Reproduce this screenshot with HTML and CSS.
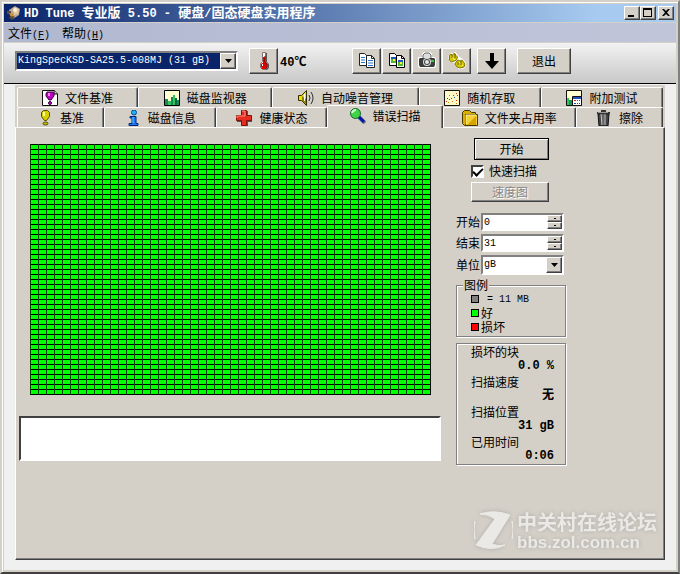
FILE: index.html
```html
<!DOCTYPE html>
<html lang="zh-CN">
<head>
<meta charset="utf-8">
<meta name="viewport" content="width=device-width, initial-scale=1">
<title>HD Tune 专业版 5.50</title>
<link rel="stylesheet" href="styles.css">
</head>
<body>
<div class="window">
  <header class="titlebar">
    <svg class="app-icon" width="16" height="16" viewBox="0 0 16 16"><path d="M3 5 9 1l5 3-1 6-6 4-3-3z" fill="#b9aa96"/><path d="M8 2l5 2-1 5-4 1z" fill="#e8c8a0"/><circle cx="9" cy="5" r="2" fill="#fff0d8"/><path d="M1 6h4v3H1zM5 10l4 2-3 3-3-2z" fill="#5a4a40"/><path d="M3 8l5 1-2 3z" fill="#d79030"/></svg>
    <h1><span class="latin">HD Tune </span>专业版<span class="latin"> 5.50 - </span>硬盘<span class="latin">/</span>固态硬盘实用程序</h1>
    <div class="window-buttons">
      <button class="raised" aria-label="最小化"><svg width="10" height="10" viewBox="0 0 10 10"><path d="M1 7h6v2H1z"/></svg></button>
      <button class="raised" aria-label="最大化"><svg width="10" height="10" viewBox="0 0 10 10"><path fill-rule="evenodd" d="M0 0h9v9H0zM1 2v6h7V2z"/></svg></button>
      <button class="raised close" aria-label="关闭"><svg width="10" height="10" viewBox="0 0 10 10"><path d="M1 1h2l2 2 2-2h2L6 4.500 9 8H7L5 6 3 8H1l3-3.500z"/></svg></button>
    </div>
  </header>
  <nav class="menubar">
    <a href="#file">文件<span class="key">(<u>F</u>)</span></a>
    <a href="#help">帮助<span class="key">(<u>H</u>)</span></a>
  </nav>
  <div class="toolbar">
    <div class="combo drive">
      <select aria-label="硬盘"><option>KingSpecKSD-SA25.5-008MJ (31 gB)</option></select>
      <span class="arrow raised"><svg width="7" height="4" viewBox="0 0 7 4"><path d="M0 0h7L3.500 4z"/></svg></span>
    </div>
    <button class="raised tool" aria-label="温度"><svg width="14" height="20" viewBox="0 0 14 20"><path d="M7 2h3v9l2 2v4l-2 2H6z" fill="#555"/><path d="M5.500 1.500h3v9l2 2v4l-2 2h-3l-2-2v-4l2-2z" fill="#fff" stroke="#8a7070"/><path d="M6 6h2v6H6z" fill="#e00000"/><path d="M5 12h4l1 1v3l-1 2H5l-1-2v-3z" fill="#e00000"/><path d="M5 13h1v2H5z" fill="#fff"/><path d="M8 5v6l2 2v3l-2 2" fill="none" stroke="#800000"/></svg></button>
    <output class="temperature">40℃</output>
    <div class="tool-group">
      <button class="raised tool" aria-label="复制文本"><svg width="18" height="18" viewBox="0 0 18 18"><path d="M1.500 1.500h5l2 2v10h-7zM8.500 3.500h5l3 3v9h-8z" fill="#fff" stroke="#222"/><path d="M13.500 3.500v3h3" fill="none" stroke="#222"/><path d="M3 5.500h4M3 8h4M3 10.500h4M10 8.500h5M10 11h5M10 13.500h5" stroke="#2874cc"/></svg></button>
      <button class="raised tool" aria-label="复制图像"><svg width="18" height="18" viewBox="0 0 18 18"><path d="M1.500 1.500h5l2 2v10h-7zM8.500 3.500h5l3 3v9h-8z" fill="#fff" stroke="#000"/><path d="M13.500 3.500v3h3" fill="none" stroke="#000"/><path d="M3 5h5v6H3zM10 8h5v6h-5z" fill="#52b929"/><path d="M3 5h5v2H3zM10 8h5v2h-5z" fill="#1759bc"/><path d="M5 7h2v2H5zM12 10h2v2h-2z" fill="#ffed50"/></svg></button>
      <button class="raised tool" aria-label="屏幕截图"><svg width="18" height="18" viewBox="0 0 18 18"><path d="M0 5h4V2l2-2h6l2 2v3h3l1 2v7l-1 2H1l-1-2z" fill="#fff"/><path d="M5 6V3l2-2h4l2 2v3" fill="#ddd" stroke="#666"/><path d="M2 6h14l1 1v6l-1 2H2l-1-2V7z" fill="#3a3d3d"/><circle cx="9" cy="10" r="4" fill="#ddd"/><circle cx="9" cy="10" r="3" fill="#454545"/><circle cx="9" cy="10" r="2" fill="#e8e8e8"/><path d="M13 8h3v2h-3z" fill="#31d03b"/></svg></button>
      <button class="raised tool" aria-label="选项"><svg width="18" height="18" viewBox="0 0 18 18"><path d="M1 4l2-3 2 1 2-2 3 4 1 2 2 0 3 3 2 3-2 4-5 1-3-3v-3l-4-1-3-3z" fill="#fff" stroke="#fff"/><path d="M1.500 4l1-2 2 1 2-2 1 2 2 2-1 3-2 1-3 1-2-2zM8 10l2-2 2 1 2-1 3 4-1 3-4 1-3-1-2-3z" fill="#d8ca00" stroke="#807600"/><path d="M3 4l4 4m4 2 4 4" stroke="#fff58a"/><path d="M4 3v3m3-4v4m3 4v3m3-4v4" stroke="#665f00"/></svg></button>
    </div>
    <button class="raised tool save" aria-label="保存"><svg width="16" height="18" viewBox="0 0 16 18"><path d="M6 1h4v8h5l-7 8-7-8h5z"/></svg></button>
    <button class="raised exit">退出</button>
  </div>
  <main class="client">
    <div class="tabs" role="tablist">
      <div class="tab-row back">
        <button role="tab"><svg class="icon" viewBox="0 0 16 16"><path d="M.5.5h12l3 3v12H.5z" fill="#fff" stroke="#111"/><path d="M12 0v4h4" fill="#bbb" stroke="#111"/><path d="M5 2h6l1 2v2l-3 4H7L4 6V4z" fill="#c000c0" stroke="#400040"/><path d="M6 3h2v3H6z" fill="#ff80ff"/><circle cx="8" cy="13" r="1.500" fill="#c000c0" stroke="#400040"/></svg>文件基准</button>
        <button role="tab"><svg class="icon" viewBox="0 0 16 16"><path d="M.5.5h15v15H.5z" fill="#ffffd0" stroke="#000"/><path d="M1 9h3v6H1zm6-2h2v8H7zm6 3h2v5h-2z" fill="#178b56"/><path d="M4 11h3v4H4zm5-6h2v10H9z" fill="#35c45b"/><path d="M11 8h2v7h-2z" fill="#087044"/></svg>磁盘监视器</button>
        <button role="tab"><svg class="icon" viewBox="0 0 16 16"><path d="M.5 5.500h3l5-5v15l-5-5h-3z" fill="#eee000" stroke="#332f00"/><path d="M4 6v5l4 3V9z" fill="#8a8000"/><path d="M6.500 4v7" stroke="#fff"/><path d="M11 5q2 3 0 6m2-9q4 6 0 12" fill="none" stroke="#333"/></svg>自动噪音管理</button>
        <button role="tab"><svg class="icon" viewBox="0 0 16 16"><path d="M.5.5h15v15H.5z" fill="#fff9c8" stroke="#111"/><path d="M2 11h1v1H2zm3-2h1v1H5zm4-4h1v1H9zm3-2h1v1h-1zm0 7h1v1h-1z" fill="#e02020"/><path d="M3 8h1v1H3zm4 0h1v1H7zm3-1h1v1h-1zm3-2h1v1h-1z" fill="#2050d0"/><path d="M4 12h1v1H4zm4-1h1v1H8zm4 2h1v1h-1zM5 5h1v1H5z" fill="#d08000"/></svg>随机存取</button>
        <button role="tab"><svg class="icon" viewBox="0 0 16 16"><path d="M.5.5h15v15H.5z" fill="#ffffd0" stroke="#111"/><path d="M1 8h2v7H1z" fill="#35c45b"/><path d="M3 10h3v5H3z" fill="#169451"/><path d="M6.500 6.500h9v9h-9z" fill="#fff" stroke="#111"/><path d="M7 7h8v2H7z" fill="#244ebd"/><path d="M8 10h2v1H8zm3 0h1v1h-1zm2 0h1v1h-1z" fill="#d22"/><path d="M8 13h2v1H8zm3 0h1v1h-1zm2 0h1v1h-1z" fill="#24b"/></svg>附加测试</button>
      </div>
      <div class="tab-row front">
        <button role="tab"><svg class="icon" viewBox="0 0 16 16"><path d="M6.500.5h4l2 2v4l-3 4h-2l-3-4v-4z" fill="#d8cf00" stroke="#514e00"/><path d="M6 2h2v4H6z" fill="#ffffa0"/><ellipse cx="8.500" cy="13.500" rx="2.500" ry="1.500" fill="#c5bb00" stroke="#514e00"/></svg>基准</button>
        <button role="tab"><svg class="icon" viewBox="0 0 16 16"><circle cx="9" cy="2.500" r="2.500" fill="#20b0ff" stroke="#004b8c"/><path d="M5 6.500h6v7h2v2H4v-2h3V8H5z" fill="#1878ff" stroke="#002871"/><path d="M8 7v6" stroke="#69c7ff"/></svg>磁盘信息</button>
        <button role="tab"><svg class="icon" viewBox="0 0 16 16"><path d="M6 1h6v5h4v6h-4v4H6v-4H1V6h5z" fill="#555"/><path d="M5.500.5h5v5h5v5h-5v5h-5v-5h-5v-5h5z" fill="#e52c20" stroke="#841008"/><path d="M6 1h3v5H1v2" fill="none" stroke="#ff9280"/></svg>健康状态</button>
        <button role="tab" aria-selected="true"><svg class="icon" viewBox="0 0 16 16"><path d="M9 9l6 6" stroke="#777" stroke-width="4"/><path d="M9 9l5 5" stroke="#0018b0" stroke-width="3"/><circle cx="5.500" cy="5.500" r="5" fill="#42d247" stroke="#16602d"/><path d="M2 5q1-3 4-3" fill="none" stroke="#d4ffd4" stroke-width="2"/></svg>错误扫描</button>
        <button role="tab"><svg class="icon" viewBox="0 0 16 16"><path d="M.5 2.500l2-2h5l2 2h4v13h-11l-2-2z" fill="#d7ad00" stroke="#493900"/><path d="M3.500 4.500h12v11h-12z" fill="#f4cf38" stroke="#493900"/><path d="M4 5h10M4 5v9" stroke="#fff2a0"/><path d="M6 14l8-8v9H5z" fill="#d4a500"/></svg>文件夹占用率</button>
        <button role="tab"><svg class="icon" viewBox="0 0 16 16"><path d="M2 4h11l-1 12H3z" fill="#444" stroke="#111"/><path d="M5 4l1 11M9 4v11" stroke="#ccc"/><path d="M7 4v11" stroke="#888"/><path d="M1 2h4V0h5v2h4v2H1z" fill="#333"/><path d="M2 2.500h10" stroke="#999"/></svg>擦除</button>
      </div>
    </div>
    <section class="panel">
      <div class="scan">
        <div class="block-map" role="img" aria-label="扫描结果"></div>
        <textarea class="log" aria-label="日志" readonly></textarea>
      </div>
      <form class="side">
        <div class="actions">
          <button type="button" class="raised start">开始</button>
          <label class="check"><input type="checkbox" checked>快速扫描</label>
          <button type="button" class="raised speed" disabled>速度图</button>
        </div>
        <div class="fields">
          <label for="from">开始</label>
          <div class="spin"><input id="from" type="text" value="0"><span class="steps"><button type="button" class="raised" aria-label="增加"></button><button type="button" class="raised" aria-label="减少"></button></span></div>
          <label for="to">结束</label>
          <div class="spin"><input id="to" type="text" value="31"><span class="steps"><button type="button" class="raised" aria-label="增加"></button><button type="button" class="raised" aria-label="减少"></button></span></div>
          <label for="unit">单位</label>
          <div class="combo"><select id="unit"><option>gB</option></select><span class="arrow raised"><svg width="7" height="4" viewBox="0 0 7 4"><path d="M0 0h7L3.500 4z"/></svg></span></div>
        </div>
        <fieldset class="group key-list">
          <legend>图例</legend>
          <ul>
            <li><i class="swatch size"></i><span class="mono">&nbsp;= 11 MB</span></li>
            <li><i class="swatch good"></i>好</li>
            <li><i class="swatch bad"></i>损坏</li>
          </ul>
        </fieldset>
        <dl class="group stats">
          <dt>损坏的块</dt><dd>0.0 %</dd>
          <dt>扫描速度</dt><dd>无</dd>
          <dt>扫描位置</dt><dd>31 gB</dd>
          <dt>已用时间</dt><dd>0:06</dd>
        </dl>
      </form>
      <div class="watermark">
        <svg width="39" height="39" viewBox="0 0 39 39"><path d="M6 3Q20-2 36 4L18 33Q25 36 31 34 18 41 2 34L21 8Q14 3 6 3zM1 10q-2 9 0 18-4-9 0-18zM38 10q2 9 0 18 4-9 0-18z" fill="#ebe9e5" stroke="#ebe9e5"/></svg>
        <div><p class="forum">中关村在线论坛</p><p class="site">bbs.zol.com.cn</p></div>
      </div>
    </section>
  </main>
</div>
</body>
</html>
```
FILE: styles.css
```css
:root {
  --face: #d4d0c8;
  --shadow: #808080;
  --dark: #404040;
  --mono: "Liberation Mono", "Noto Sans CJK SC", monospace;
}

* { box-sizing: border-box; }

body {
  margin: 0;
  font: 12px/16px "Noto Sans CJK SC", sans-serif;
  color: #000;
}

button, input, select, textarea { font: inherit; color: inherit; margin: 0; }
button { padding: 0; }
svg { display: block; flex: none; }
h1, p, ul, dl, dd { margin: 0; padding: 0; }

.window {
  display: flex;
  flex-direction: column;
  min-height: 100vh;
  padding: 2px;
  background: #f0f0f0;
  border: 2px solid var(--face);
  border-right-color: var(--shadow);
  border-bottom-color: var(--dark);
  box-shadow: inset 1px 1px #fff, inset 0 0 0 2px var(--face);
}

.raised {
  display: flex;
  align-items: center;
  justify-content: center;
  background: var(--face);
  border: 1px solid;
  border-color: #fff var(--dark) var(--dark) #fff;
  box-shadow: inset -1px -1px var(--shadow);
}

.titlebar {
  display: flex;
  align-items: center;
  gap: 2px;
  height: 18px;
  padding: 0 2px;
  background: linear-gradient(90deg, #0a246a, #a6caf0 88%);
}
.titlebar h1 {
  flex: 1;
  color: #fff;
  font: bold 13px/18px "Noto Sans CJK SC", sans-serif;
  white-space: nowrap;
}
.latin { font: bold 12px/18px var(--mono); white-space: pre; }
.window-buttons { display: flex; }
.window-buttons button { width: 16px; height: 14px; }
.window-buttons .close { margin-left: 2px; }

.menubar {
  display: flex;
  gap: 12px;
  height: 21px;
  padding: 0 4px;
  border: solid var(--face);
  border-width: 1px 0;
  background: linear-gradient(90deg, #b0b8d0, #c0c5da);
  line-height: 19px;
}
.menubar a { color: inherit; text-decoration: none; }
.key { font: 10px var(--mono); }

.toolbar {
  display: flex;
  align-items: center;
  height: 41px;
  padding: 0 11px 4px;
  border-bottom: 1px solid #000;
  background: linear-gradient(#f2f2f2, #c8c8c8);
}
.tool { width: 29px; height: 26px; }
.drive { width: 223px; margin-right: 11px; }
.temperature { width: 74px; padding-left: 2px; font: bold 12px var(--mono); }
.tool-group { display: flex; gap: 1px; }
.save { margin-left: 6px; }
.exit { width: 54px; height: 26px; margin-left: 11px; }

.combo { position: relative; }
.combo select {
  display: block;
  width: 100%;
  height: 20px;
  padding: 0 18px 0 1px;
  appearance: none;
  background: #fff;
  border: 2px solid;
  border-color: var(--shadow) #fff #fff var(--shadow);
  border-radius: 0;
  outline: none;
  font: 10px/16px var(--mono);
}
.combo .arrow {
  position: absolute;
  top: 2px;
  right: 2px;
  width: 16px;
  height: 16px;
  pointer-events: none;
}
.drive select { background: #0a246a; color: #fff; }

.client {
  display: flex;
  flex: 1;
  flex-direction: column;
  padding: 1px 11px 10px;
}
.tabs { padding: 2px 2px 0; background: var(--face); }
.tab-row { display: grid; height: 20px; }
.back { grid-template-columns: 121fr 134fr 146fr 122fr 122fr; }
.front { grid-template-columns: 87fr 112fr 111fr 115fr 133fr 87fr; }
.tab-row button {
  display: flex;
  align-items: center;
  justify-content: center;
  gap: 7px;
  min-width: 0;
  background: var(--face);
  border: 1px solid;
  border-color: #fff var(--dark) transparent #fff;
  border-bottom-width: 0;
  border-radius: 2px 2px 0 0;
  box-shadow: inset -1px 0 var(--shadow);
  white-space: nowrap;
}
.tab-row [aria-selected="true"] {
  z-index: 1;
  height: 23px;
  margin-top: -2px;
  padding-bottom: 3px;
}
.icon { width: 16px; height: 16px; }

.panel {
  position: relative;
  display: grid;
  flex: 1;
  grid-template-columns: minmax(0, 422px) 110px;
  align-items: start;
  gap: 15px;
  padding: 10px 3px;
  background: var(--face);
  border: 1px solid;
  border-color: #fff var(--dark) var(--dark) #fff;
  box-shadow: inset -1px -1px var(--shadow);
}
.block-map {
  height: 251px;
  margin: 6px 10px 21px 11px;
  border: solid #000;
  border-width: 0 1px 1px 0;
  background:
    linear-gradient(90deg, #063c06 1px, transparent 1px) 0 0 / 8px 5px,
    linear-gradient(#000 1px, #0f0 1px) 0 0 / 8px 5px;
}
.log {
  display: block;
  width: 100%;
  height: 45px;
  resize: none;
  background: #fff;
  border: 2px solid;
  border-color: var(--dark) #fff #fff var(--dark);
  outline: none;
}

.actions {
  display: grid;
  justify-items: end;
  gap: 3px;
  padding-right: 17px;
}
.start { width: 75px; height: 22px; border-color: #000; box-shadow: inset 1px 1px #fff, inset -1px -1px var(--shadow); }
.check { display: flex; align-items: center; gap: 5px; width: 78px; white-space: nowrap; }
.check input {
  flex: none;
  width: 13px;
  height: 13px;
  appearance: none;
  background: #fff;
  border: 2px solid;
  border-color: var(--dark) #fff #fff var(--dark);
}
.check input:checked::before {
  content: "";
  display: block;
  width: 8px;
  height: 4px;
  margin-top: 1px;
  border: solid #000;
  border-width: 0 0 2px 2px;
  transform: rotate(-45deg);
}
.speed { width: 78px; height: 20px; color: #888; text-shadow: 1px 1px #fff; }

.fields {
  display: grid;
  grid-template-columns: 25px 83px;
  align-items: center;
  row-gap: 3px;
  padding-top: 11px;
}
.fields label { white-space: nowrap; }
.spin {
  display: flex;
  height: 18px;
  background: #fff;
  border: 2px solid;
  border-color: var(--shadow) #fff #fff var(--shadow);
}
.spin input { flex: 1; min-width: 0; padding: 0 1px; border: 0; outline: none; font: 10px var(--mono); }
.steps { display: grid; width: 15px; }
.steps button::before { content: ""; width: 2px; height: 1px; background: #000; }

.group {
  border: 1px solid var(--shadow);
  box-shadow: 1px 1px #fff, inset 1px 1px #fff;
}
.key-list { min-width: 0; margin: 3px 0 6px; padding: 0 14px 2px; }
.key-list legend { margin-left: -8px; padding: 0 1px; line-height: 14px; background: var(--face); }
.key-list ul { list-style: none; }
.key-list li { display: flex; align-items: center; gap: 2px; height: 14px; line-height: 14px; }
.swatch { width: 8px; height: 8px; border: 1px solid #000; }
.size { background: #808080; }
.good { background: #0f0; }
.bad { background: #f00; }
.mono { font: 10px var(--mono); white-space: pre; }
.stats { padding: 0 11px 0 14px; line-height: 15px; }
.stats dd { font: bold 12px/15px var(--mono); text-align: right; }

.watermark {
  position: absolute;
  right: 7px;
  bottom: 6px;
  display: flex;
  gap: 4px;
  color: #ebe9e5;
  filter: drop-shadow(0 0 2px #8888);
}
.forum { font: bold 20px/22px "Noto Sans CJK SC", sans-serif; }
.site { font: bold 17px/20px "Liberation Sans", sans-serif; }
```
